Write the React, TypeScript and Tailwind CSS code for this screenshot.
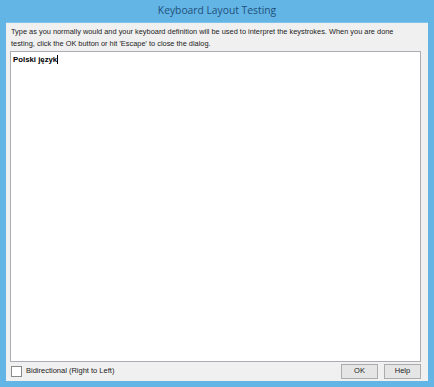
export default function App() {
  return (
    <div className="w-[434px] h-[387px] bg-[#63b5e6] flex flex-col px-[6px] pb-[6px]" style={{ fontFamily: '"Liberation Sans", Arial, sans-serif' }}>
      <div className="h-[22px] flex items-center justify-center text-[10.3px] text-[#1f5079]" style={{ fontFamily: '"Open Sans", "Noto Sans", sans-serif' }}>
        Keyboard Layout Testing
      </div>
      <div className="flex-1 bg-[#f0f0f0] flex flex-col px-[4px] pt-[3px] pb-[2px] border-t border-[#7fc2ea]">
        <p className="text-[7.4px] leading-[12px] text-[#222] pl-[1px] whitespace-nowrap">
          Type as you normally would and your keyboard definition will be used to interpret the keystrokes. When you are done
          <br />
          testing, click the OK button or hit 'Escape' to close the dialog.
        </p>
        <div className="mt-[1px] flex-1 bg-white border border-[#abadb3] px-[2px] pt-[3px] mr-[3px] text-[7.8px] leading-[10px]">
          <span className="font-bold text-black">Polski język</span>
          <span className="inline-block w-px h-[9px] bg-black align-middle" />
        </div>
        <div className="h-[16px] flex items-center mt-[1px]">
          <div className="w-[11px] h-[11px] border border-[#8a8a8a] bg-white ml-[1px]" />
          <span className="ml-[4px] text-[7.5px] text-[#222]">Bidirectional (Right to Left)</span>
          <div className="ml-auto flex gap-[6px] mr-[3px]">
            <button className="w-[37px] h-[15px] border border-[#acacac] bg-[#e5e5e5] text-[7.5px] text-[#222]">OK</button>
            <button className="w-[37px] h-[15px] border border-[#acacac] bg-[#e5e5e5] text-[7.5px] text-[#222]">Help</button>
          </div>
        </div>
      </div>
    </div>
  );
}
